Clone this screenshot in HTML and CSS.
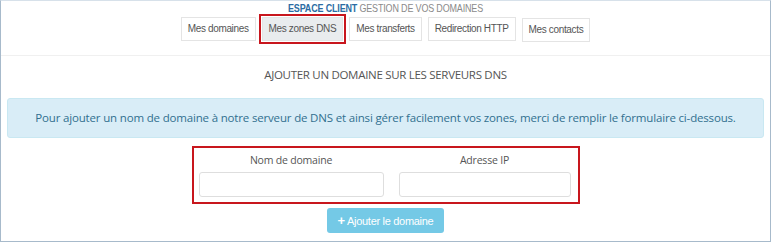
FILE: index.html
```html
<!DOCTYPE html>
<html lang="fr">
<head>
  <meta charset="UTF-8" />
  <title>Espace client - Mes zones DNS</title>
  <link rel="stylesheet" href="styles.css">
</head>
<body>

  <div class="frame">
    <div class="head">
      <h1 class="title"><strong>ESPACE CLIENT</strong> GESTION DE VOS DOMAINES</h1>
      <nav class="tabs">
        <a href="#" class="tab">Mes domaines</a>
        <a href="#" class="tab active">Mes zones DNS</a>
        <a href="#" class="tab">Mes transferts</a>
        <a href="#" class="tab">Redirection HTTP</a>
        <a href="#" class="tab low">Mes contacts</a>
      </nav>
    </div>

    <div class="panel">
      <h2 class="panel-title">AJOUTER UN DOMAINE SUR LES SERVEURS DNS</h2>

      <div class="alert">Pour ajouter un nom de domaine à notre serveur de DNS et ainsi gérer facilement vos zones, merci de remplir le formulaire ci-dessous.</div>

      <form class="dns-form">
        <div class="fields">
          <label class="field">
            <span>Nom de domaine</span>
            <input type="text" />
          </label>
          <label class="field">
            <span>Adresse IP</span>
            <input type="text" />
          </label>
        </div>
        <button type="button" class="btn-add" disabled><b>+</b> Ajouter le domaine</button>
      </form>
    </div>
  </div>

</body>
</html>
```

FILE: styles.css
```css
* {
  box-sizing: border-box;
  margin: 0;
}

body {
  background-color: #ffffff;
  font-family: 'Open Sans', 'Liberation Sans', sans-serif;
}

.frame {
  width: 771px;
  height: 242px;
  border: 1px solid #a7bacb;
  border-top-color: #d7e1ea;
}

.head {
  text-align: center;
}

/* police condensée absente : on resserre le titre */
.title {
  font-family: 'Liberation Sans', Arial, sans-serif;
  font-size: 11.5px;
  letter-spacing: -0.2px;
  line-height: 15px;
  font-weight: normal;
  color: #8a8a8a;
  transform: scaleX(0.78);
}

.title strong {
  color: #2b6ca3;
}

.tabs {
  display: flex;
  justify-content: center;
  gap: 6px;
  margin-top: 1px;
}

.tab {
  display: block;
  height: 24px;
  line-height: 22px;
  padding: 0 6px;
  font-family: 'Liberation Sans', Arial, sans-serif;
  font-size: 10px;
  letter-spacing: -0.35px;
  color: #555;
  text-decoration: none;
  background: #fff;
  border: 1px solid #e4e4e4;
}

.tab.active {
  background: #e9ecee;
  outline: 2px solid #c8161d;
  outline-offset: 1px;
}

.tab.low {
  margin-top: 1px;
}

.panel {
  margin-top: 13px;
  padding: 10px 6px 0;
  border-top: 1px solid #f0f0f0;
}

.panel-title {
  font-size: 11.5px;
  letter-spacing: -0.3px;
  line-height: 18px;
  font-weight: normal;
  color: #555;
  text-align: center;
}

.alert {
  margin-top: 14px;
  padding: 11px 10px;
  font-size: 11.5px;
  letter-spacing: -0.17px;
  line-height: 16px;
  color: #31708f;
  text-align: center;
  white-space: nowrap;
  background-color: #d9edf7;
  border: 1px solid #c9e8f2;
  border-radius: 3px;
}

.dns-form {
  display: flex;
  flex-direction: column;
  align-items: center;
}

.fields {
  display: grid;
  grid-template-columns: 185px 172px;
  column-gap: 15px;
  width: 388px;
  margin-top: 8px;
  padding: 5px 5px 5px;
  border: 2px solid #c8161d;
}

.field {
  display: flex;
  flex-direction: column;
  align-items: center;
  font-size: 10.5px;
  letter-spacing: -0.2px;
  line-height: 14px;
  color: #555;
}

.field input {
  width: 100%;
  height: 25px;
  margin-top: 5px;
  border: 1px solid #dedede;
  border-radius: 3px;
}

.btn-add {
  width: 117px;
  height: 25px;
  margin-top: 4px;
  font-family: 'Liberation Sans', Arial, sans-serif;
  font-size: 11px;
  letter-spacing: -0.3px;
  white-space: nowrap;
  color: #fff;
  background-color: #74c9e6;
  border: none;
  border-radius: 3px;
}

.btn-add b {
  font-size: 13px;
}
```
